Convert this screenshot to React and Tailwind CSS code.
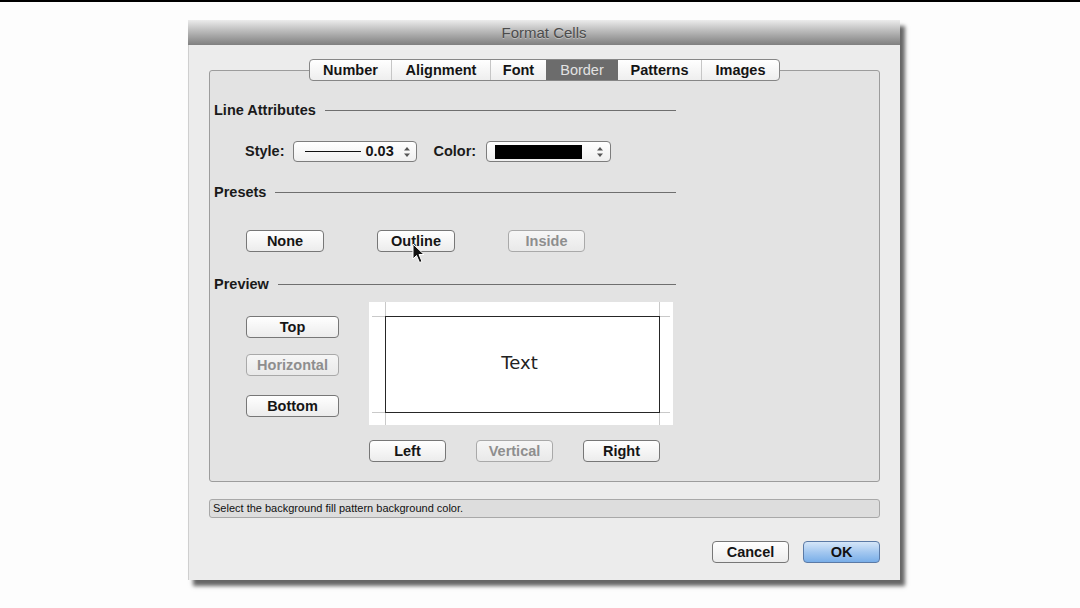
import React from "react";

function Btn({ w, children, disabled, className = "" }) {
  return (
    <div
      className={
        "h-[22px] rounded-[4px] border flex items-center justify-center text-[14.5px] font-bold leading-none bg-gradient-to-b shrink-0 " +
        (disabled
          ? "border-[#a9a9a9] text-[#8e8e8e] from-[#f6f6f6] to-[#e9e9e9] "
          : "border-[#777777] text-[#151515] from-[#ffffff] to-[#ececec] ") +
        className
      }
      style={{ width: w }}
    >
      {children}
    </div>
  );
}

function Arrows() {
  return (
    <svg width="8" height="12" viewBox="0 0 8 12" className="shrink-0">
      <path d="M4 1 L7 4.5 L1 4.5 Z" fill="#555" />
      <path d="M4 11 L7 7.5 L1 7.5 Z" fill="#555" />
    </svg>
  );
}

function Header({ children }) {
  return (
    <div className="ml-[4px] w-[462px] h-[18px] flex items-center">
      <span className="text-[14.5px] font-bold text-[#1a1a1a] leading-none whitespace-nowrap">
        {children}
      </span>
      <div className="flex-1 ml-[9px] h-px bg-[#6f6f6f]" />
    </div>
  );
}

const tabs = [
  { label: "Number", w: 81 },
  { label: "Alignment", w: 99 },
  { label: "Font", w: 56 },
  { label: "Border", w: 72, sel: true },
  { label: "Patterns", w: 83 },
  { label: "Images", w: 78 },
];

export default function App() {
  return (
    <div className="w-[1080px] h-[608px] bg-[#fdfdfd] border-t-2 border-black overflow-hidden font-['Liberation_Sans',Arial,sans-serif]">
      <div className="ml-[188px] mt-[18px] w-[712px] shadow-[5px_6px_4px_rgba(0,0,0,0.6)]">
        {/* title bar */}
        <div className="h-[25px] bg-gradient-to-b from-[#ececec] via-[#b4b4b4] to-[#808080] flex items-center justify-center">
          <span className="text-[15px] text-[#4c4c4c] leading-none [text-shadow:0_1px_0_rgba(255,255,255,0.35)]">
            Format Cells
          </span>
        </div>
        {/* body */}
        <div className="bg-[#ececec] px-[20px] pt-[25px] pb-[17px] border-l border-[#cfcfcf]">
          {/* group box */}
          <div className="relative h-[412px] border border-[#9c9c9c] rounded-[3px] bg-[#e3e3e3] flex flex-col pt-[30px]">
            {/* tabs */}
            <div className="absolute top-[-12px] left-[99px] h-[22px] border border-[#868686] rounded-[4px] bg-gradient-to-b from-[#ffffff] to-[#eeeeee] flex overflow-hidden">
              {tabs.map((t, i) => {
                const prevSel = i > 0 && tabs[i - 1].sel;
                const sep = i > 0 && !t.sel && !prevSel;
                return (
                  <div
                    key={t.label}
                    className={
                      "h-full flex items-center justify-center text-[14.5px] leading-none " +
                      (t.sel
                        ? "bg-[#6c6c6c] text-[#e2e2e2] font-normal "
                        : "text-[#141414] font-bold ") +
                      (sep ? "border-l border-[#c6c6c6]" : "")
                    }
                    style={{ width: t.w }}
                  >
                    {t.label}
                  </div>
                );
              })}
            </div>

            <Header>Line Attributes</Header>

            {/* style / color row */}
            <div className="mt-[22px] ml-[35px] h-[21px] flex items-center">
              <span className="text-[14.5px] font-bold text-[#1a1a1a] leading-none">Style:</span>
              <div className="ml-[8px] w-[124px] h-[21px] rounded-[4px] border border-[#7d7d7d] bg-gradient-to-b from-[#ffffff] to-[#efefef] flex items-center pl-[11px] pr-[5px]">
                <div className="w-[56px] h-px bg-[#111]" />
                <span className="ml-[5px] text-[14.5px] font-bold text-[#151515] leading-none">0.03</span>
                <div className="ml-auto">
                  <Arrows />
                </div>
              </div>
              <span className="ml-[17px] text-[14.5px] font-bold text-[#1a1a1a] leading-none">Color:</span>
              <div className="ml-[10px] w-[125px] h-[21px] rounded-[4px] border border-[#7d7d7d] bg-gradient-to-b from-[#ffffff] to-[#efefef] flex items-center pl-[8px] pr-[6px]">
                <div className="w-[87px] h-[14px] bg-black" />
                <div className="ml-auto">
                  <Arrows />
                </div>
              </div>
            </div>

            <div className="mt-[21px]">
              <Header>Presets</Header>
            </div>

            {/* presets buttons */}
            <div className="mt-[29px] ml-[36px] flex">
              <Btn w={78}>None</Btn>
              <div className="relative ml-[53px]">
                <Btn w={78}>Outline</Btn>
                <svg
                  className="absolute left-[35px] top-[13px]"
                  width="13"
                  height="21"
                  viewBox="0 0 13 21"
                >
                  <path
                    d="M1 1 L1 16 L4.5 12.5 L7.5 19.5 L10 18.5 L7 11.5 L12 11.5 Z"
                    fill="#111"
                    stroke="#fff"
                    strokeWidth="1"
                    strokeLinejoin="round"
                  />
                </svg>
              </div>
              <Btn w={77} disabled className="ml-[53px]">
                Inside
              </Btn>
            </div>

            <div className="mt-[23px]">
              <Header>Preview</Header>
            </div>

            {/* preview area */}
            <div className="mt-[9px] ml-[36px] flex">
              <div className="w-[93px] pt-[14px] flex flex-col">
                <Btn w={93}>Top</Btn>
                <Btn w={93} disabled className="mt-[16px]">
                  Horizontal
                </Btn>
                <Btn w={93} className="mt-[19px]">
                  Bottom
                </Btn>
              </div>
              <div className="ml-[30px] flex flex-col">
                <div className="relative w-[304px] h-[123px] bg-white">
                  <div className="absolute left-[16px] top-0 w-px h-full bg-[#c9c9c9]" />
                  <div className="absolute left-[290px] top-0 w-px h-full bg-[#c9c9c9]" />
                  <div className="absolute left-[3px] right-[3px] top-[14px] h-px bg-[#c9c9c9]" />
                  <div className="absolute left-[3px] right-[3px] top-[110px] h-px bg-[#c9c9c9]" />
                  <div className="absolute left-[16px] top-[14px] w-[275px] h-[97px] border-[1.5px] border-[#262626] flex items-center justify-center">
                    <span className="font-['DejaVu_Sans',sans-serif] text-[18px] text-[#222] leading-none mt-[-4px] mr-[6px]">
                      Text
                    </span>
                  </div>
                </div>
                <div className="mt-[15px] flex">
                  <Btn w={77}>Left</Btn>
                  <Btn w={77} disabled className="ml-[30px]">
                    Vertical
                  </Btn>
                  <Btn w={77} className="ml-[30px]">
                    Right
                  </Btn>
                </div>
              </div>
            </div>
          </div>

          {/* status bar */}
          <div className="mt-[17px] h-[19px] rounded-[3px] border border-[#a8a8a8] bg-[#dddddd] flex items-center pl-[3px]">
            <span className="text-[11px] text-[#111] leading-none">
              Select the background fill pattern background color.
            </span>
          </div>

          {/* bottom buttons */}
          <div className="mt-[23px] flex justify-end">
            <Btn w={77}>Cancel</Btn>
            <div className="ml-[14px] w-[77px] h-[22px] rounded-[4px] border border-[#5b7aa6] bg-gradient-to-b from-[#d5e6f8] via-[#a4c8f0] to-[#79aee8] flex items-center justify-center text-[14.5px] font-bold text-[#111] leading-none">
              OK
            </div>
          </div>
        </div>
      </div>
    </div>
  );
}
